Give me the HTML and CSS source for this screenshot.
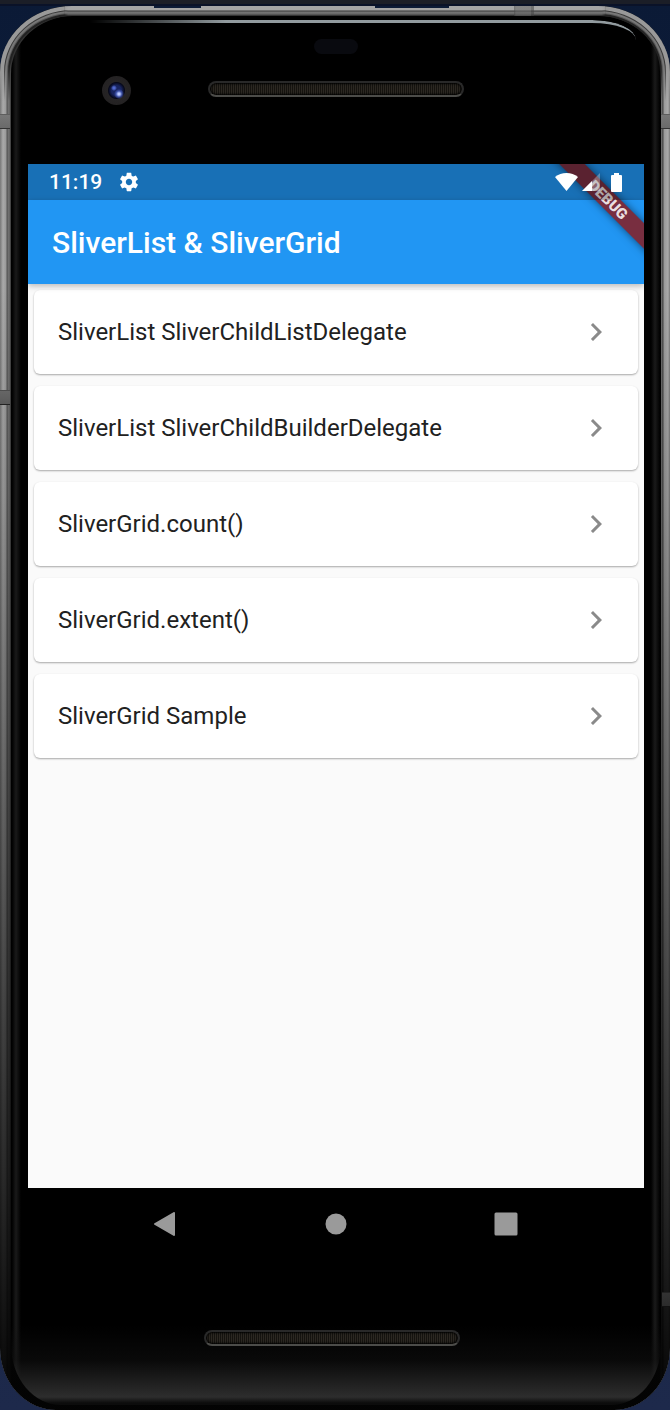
FILE: index.html
```html
<!DOCTYPE html>
<html lang="en">
<head>
<meta charset="utf-8">
<meta name="viewport" content="width=device-width, initial-scale=1">
<title>SliverList &amp; SliverGrid</title>
<link rel="stylesheet" href="styles.css">
</head>
<body>
<div class="phone">
  <div class="chassis">
    <div class="glint"></div>
    <div class="earpiece">
      <span class="sensor"></span>
      <span class="camera"></span>
      <span class="speaker"></span>
    </div>

    <div class="screen">
      <div class="status-bar">
        <span class="clock">11:19</span>
        <svg class="gear" viewBox="0 0 24 24" aria-hidden="true"><path fill="currentColor" d="M19.43 12.98c.04-.32.07-.64.07-.98s-.03-.66-.07-.98l2.11-1.65c.19-.15.24-.42.12-.64l-2-3.46c-.12-.22-.39-.3-.61-.22l-2.49 1c-.52-.4-1.08-.73-1.69-.98l-.38-2.65C14.46 2.18 14.25 2 14 2h-4c-.25 0-.46.18-.49.42l-.38 2.65c-.61.25-1.17.59-1.69.98l-2.49-1c-.23-.09-.49 0-.61.22l-2 3.46c-.13.22-.07.49.12.64l2.11 1.65c-.04.32-.07.65-.07.98s.03.66.07.98l-2.11 1.65c-.19.15-.24.42-.12.64l2 3.46c.12.22.39.3.61.22l2.49-1c.52.4 1.08.73 1.69.98l.38 2.65c.03.24.24.42.49.42h4c.25 0 .46-.18.49-.42l.38-2.65c.61-.25 1.17-.59 1.69-.98l2.49 1c.23.09.49 0 .61-.22l2-3.46c.12-.22.07-.49-.12-.64l-2.11-1.65zM12 15.5c-1.93 0-3.5-1.57-3.5-3.5s1.57-3.5 3.5-3.5 3.5 1.57 3.5 3.5-1.57 3.5-3.5 3.5z"/></svg>
        <span class="spacer"></span>
        <svg class="wifi" viewBox="0 0 23 18" aria-hidden="true"><path fill="currentColor" d="M11.500 18L0 4Q5 0 11.500 0T23 4Z"/></svg>
        <svg class="signal" viewBox="0 0 18 18" aria-hidden="true"><path fill="currentColor" opacity=".3" d="M18 0V18H0Z"/><path fill="currentColor" d="M10 8V18H0Z"/></svg>
        <svg class="battery" viewBox="0 0 11 19" aria-hidden="true"><path fill="currentColor" d="M3 0H8V2H10Q11 2 11 3V18Q11 19 10 19H1Q0 19 0 18V3Q0 2 1 2H3Z"/></svg>
      </div>
      <header class="app-bar"><h1 class="title">SliverList &amp; SliverGrid</h1></header>
      <main class="list">
        <a class="card" href="#list-delegate"><span>SliverList SliverChildListDelegate</span><svg class="chevron" viewBox="0 0 24 24" aria-hidden="true"><path fill="currentColor" d="M10 6 8.590 7.410 13.170 12l-4.580 4.590L10 18l6-6z"/></svg></a>
        <a class="card" href="#builder-delegate"><span>SliverList SliverChildBuilderDelegate</span><svg class="chevron" viewBox="0 0 24 24" aria-hidden="true"><path fill="currentColor" d="M10 6 8.590 7.410 13.170 12l-4.580 4.590L10 18l6-6z"/></svg></a>
        <a class="card" href="#grid-count"><span>SliverGrid.count()</span><svg class="chevron" viewBox="0 0 24 24" aria-hidden="true"><path fill="currentColor" d="M10 6 8.590 7.410 13.170 12l-4.580 4.590L10 18l6-6z"/></svg></a>
        <a class="card" href="#grid-extent"><span>SliverGrid.extent()</span><svg class="chevron" viewBox="0 0 24 24" aria-hidden="true"><path fill="currentColor" d="M10 6 8.590 7.410 13.170 12l-4.580 4.590L10 18l6-6z"/></svg></a>
        <a class="card" href="#grid-sample"><span>SliverGrid Sample</span><svg class="chevron" viewBox="0 0 24 24" aria-hidden="true"><path fill="currentColor" d="M10 6 8.590 7.410 13.170 12l-4.580 4.590L10 18l6-6z"/></svg></a>
      </main>
      <div class="ribbon">DEBUG</div>
    </div>

    <nav class="nav-bar" aria-label="System navigation">
      <button class="nav-button" type="button" aria-label="Back"><svg class="nav-icon" viewBox="0 0 24 24"><path fill="currentColor" stroke="currentColor" stroke-width="2" stroke-linejoin="round" d="M1 12 20 1V23Z"/></svg></button>
      <button class="nav-button" type="button" aria-label="Home"><svg class="nav-icon" viewBox="0 0 24 24"><circle fill="currentColor" cx="12" cy="12" r="10.500"/></svg></button>
      <button class="nav-button" type="button" aria-label="Recent apps"><svg class="nav-icon" viewBox="0 0 24 24"><rect fill="currentColor" x="0.500" y="0.500" width="23" height="23" rx="1.500"/></svg></button>
    </nav>
    <div class="chin"><span class="speaker"></span></div>
  </div>
</div>
</body>
</html>
```
FILE: styles.css
```css
* {
  box-sizing: border-box;
}

body {
  margin: 0;
  min-height: 100vh;
  display: flex;
  flex-direction: column;
  padding-top: 6px;
  background:
    linear-gradient(#1b1e27 4px, #0a1228 4px, #0a1228 6px, transparent 6px),
    linear-gradient(#0b1a36, #1d294b);
  font-family: Roboto, "Noto Sans", sans-serif;
  color: #212121;
}

/* Metal frame: notches, antenna bands, shading, brushed edge */
.phone {
  position: relative;
  flex: 1;
  display: flex;
  padding: 10px 9px 5px 11px;
  border-radius: 72px 72px 56px 56px / 66px 66px 62px 62px;
  background:
    linear-gradient(90deg, transparent 23%, #0b1a36 23%, #0b1a36 30%, transparent 30%, transparent 56%, #0b1a36 56%, #0b1a36 67%, transparent 67%) top / 100% 2px no-repeat,
    linear-gradient(90deg, #4448, #6668 2px, #6668 17px, #4448 17px) 79% 0 / 20px 10px no-repeat,
    linear-gradient(#444, #777 1px, #6a6a6a 14px, #333 14px) 0 108px / 10px 15px no-repeat,
    linear-gradient(#444, #777 1px, #6a6a6a 14px, #333 14px) 100% 108px / 9px 15px no-repeat,
    linear-gradient(#333, #666 1px, #5a5a5a 14px, #222 14px) 0 384px / 10px 15px no-repeat,
    linear-gradient(#111, #333 1px, #2c2c2c 14px, #111 14px) 100% 1286px / 8px 15px no-repeat,
    linear-gradient(transparent 20%, #0002 35%, #000b 82%, #000e 97%),
    linear-gradient(#a5a5a5 4px, #333 5px, #777 6px, #666 8px, #222 10px, transparent 10px) center 0 / calc(100% - 130px) 10px no-repeat,
    linear-gradient(90deg, #777, #aaa 3px, #999 6px, #555 7px, #777 9px, #333 11px, #333 calc(100% - 10px), #777 calc(100% - 9px), #444 calc(100% - 7px), #999 calc(100% - 6px), #aaa calc(100% - 2px), #777);
}

/* Metallic rings that follow the two top corners */
.phone::after {
  content: "";
  position: absolute;
  inset: 0;
  border-radius: inherit;
  box-shadow:
    inset 0 0 0 4px #999,
    inset 0 0 0 5px #3a3a3a,
    inset 0 0 0 7px #777,
    inset 0 0 0 8px #555,
    inset 0 0 0 10px #222;
  mask-image:
    linear-gradient(#000 60px, transparent 95px),
    linear-gradient(90deg, #000 64px, transparent 68px, transparent calc(100% - 68px), #000 calc(100% - 64px));
  mask-composite: intersect;
  pointer-events: none;
}

.chassis {
  flex: 1;
  min-width: 0;
  display: flex;
  flex-direction: column;
  padding: 0 17px;
  border-radius: 62px 62px 50px 50px / 58px 58px 60px 60px;
  background:
    linear-gradient(transparent calc(100% - 80px), #1118 calc(100% - 45px), #2d2d2d calc(100% - 8px), #0c0c0c calc(100% - 2px)),
    linear-gradient(90deg, #000 1px, #1a1a1a 5px, #000 10px, #000 calc(100% - 10px), #1a1a1a calc(100% - 6px), #000 calc(100% - 1px));
}

.glint {
  height: 20px;
  margin: 4px 8px 0 62px;
  border-top: 3px solid #929b9f;
  border-top-right-radius: 44px 20px;
  mask-image: linear-gradient(90deg, transparent, #000 25%);
}

.earpiece {
  height: 124px;
  display: grid;
  grid-template-columns: 1fr 256px 1fr;
  grid-template-rows: 13px 29px;
  row-gap: 23px;
  align-items: center;
}

.sensor {
  grid-column: 2;
  justify-self: center;
  width: 44px;
  height: 15px;
  border-radius: 8px;
  background: #090a0f;
}

.camera {
  grid-row: 2;
  grid-column: 1;
  width: 29px;
  height: 29px;
  margin-left: 74px;
  border-radius: 50%;
  background:
    radial-gradient(circle at 17px 18px, #b9c8ff 1px, #5068ceaa 3px, transparent 5px),
    radial-gradient(circle at 12px 12px, #5068ce 1px, transparent 3px),
    radial-gradient(circle, #18245f 5px, #07091a 8px, #262425 9px, #242223 14px);
}

.speaker {
  width: 256px;
  height: 16px;
  border: 2px solid #292929;
  border-bottom-color: #4c4c49;
  border-radius: 8px;
  background: repeating-linear-gradient(90deg, #15130f 0 1px, #2c2822 1px 2px);
  box-shadow: inset 0 0 2px 1px #000;
}

.earpiece .speaker {
  grid-row: 2;
  grid-column: 2;
  align-self: start;
  margin-top: 5px;
}

.screen {
  position: relative;
  flex: 1;
  overflow: hidden;
  background: linear-gradient(#2196f3 36px, #fafafa 36px);
}

/* Translucent system bar: sits above the app and its ribbon */
.status-bar {
  position: relative;
  z-index: 2;
  height: 36px;
  display: flex;
  align-items: center;
  padding: 0 22px 0 21px;
  background: rgba(0, 0, 0, 0.25);
  color: #fff;
}

.clock {
  padding-top: 1px;
  font-size: 21px;
  line-height: 35px;
  font-weight: 500;
}

.gear {
  width: 22px;
  height: 22px;
  margin-left: 16px;
}

.spacer {
  flex: 1;
}

.wifi {
  width: 23px;
  height: 18px;
  margin-right: 4px;
}

.signal {
  width: 18px;
  height: 18px;
  margin-right: 11px;
}

.battery {
  width: 11px;
  height: 19px;
}

.app-bar {
  position: relative;
  height: 84px;
  display: flex;
  align-items: center;
  padding: 2px 24px 0;
  background: #2196f3;
  color: #fff;
  box-shadow: 0 2px 6px #0004;
}

.title {
  margin: 0;
  font-size: 30px;
  line-height: 36px;
  font-weight: 500;
}

.list {
  display: flex;
  flex-direction: column;
  gap: 12px;
  padding: 6px;
}

.card {
  height: 84px;
  display: flex;
  align-items: center;
  justify-content: space-between;
  padding: 0 24px;
  border-radius: 6px;
  background: #fff;
  box-shadow: 0 1px 2px #0005;
  color: #212121;
  font-size: 24px;
  line-height: 30px;
  text-decoration: none;
}

.chevron {
  width: 36px;
  height: 36px;
  color: #8a8a8a;
}

.ribbon {
  position: absolute;
  z-index: 1;
  top: 27px;
  right: -44px;
  width: 160px;
  height: 18px;
  transform: rotate(45deg);
  background: rgba(141, 22, 22, 0.81);
  box-shadow: 0 0 9px #0008;
  color: #fffd;
  font-size: 15px;
  line-height: 18px;
  font-weight: 900;
  text-align: center;
}

.nav-bar {
  height: 72px;
  display: flex;
  align-items: center;
  justify-content: center;
  gap: 122px;
}

.nav-button {
  width: 48px;
  height: 48px;
  display: grid;
  place-items: center;
  padding: 0;
  border: 0;
  background: none;
  color: #9a9a9a;
}

.nav-icon {
  width: 24px;
  height: 24px;
}

.chin {
  height: 145px;
  display: flex;
  justify-content: center;
  padding: 70px 8px 0 0;
}
```
